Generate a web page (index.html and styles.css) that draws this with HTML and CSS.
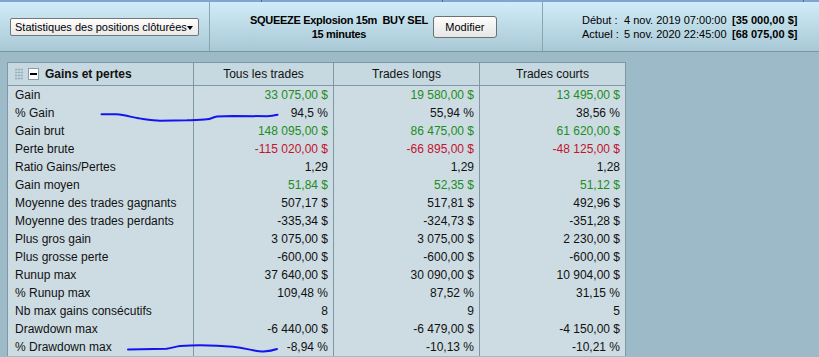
FILE: index.html
```html
<!DOCTYPE html>
<html lang="fr">
<head>
<meta charset="utf-8">
<title>Statistiques</title>
<link rel="stylesheet" href="styles.css">
</head>
<body>
<div class="topstrip">
  <span class="seg s1"></span><span class="seg s2"></span><span class="seg s3"></span><span class="seg s4"></span>
</div>
<header class="toolbar">
  <section class="tb-left">
    <div class="select">
      <span>Statistiques des positions clôturées</span>
      <span class="caret"></span>
    </div>
  </section>
  <section class="tb-mid">
    <div class="title">
      <div>SQUEEZE Explosion 15m&nbsp; BUY SEL</div>
      <div>15 minutes</div>
    </div>
    <button class="btn">Modifier</button>
  </section>
  <section class="tb-right">
    <div class="dates">
      <span>Début :</span><span>4 nov. 2019 07:00:00</span><b>[35 000,00 $]</b>
      <span>Actuel :</span><span>5 nov. 2020 22:45:00</span><b>[68 075,00 $]</b>
    </div>
  </section>
</header>

<main class="stats">
  <div class="hd first"><span class="grip"></span><span class="minus"></span><b>Gains et pertes</b></div>
  <div class="hd">Tous les trades</div>
  <div class="hd">Trades longs</div>
  <div class="hd">Trades courts</div>

  <div class="lb">Gain</div><div class="v pos">33 075,00 $</div><div class="v pos">19 580,00 $</div><div class="v pos">13 495,00 $</div>
  <div class="lb">% Gain</div><div class="v">94,5 %</div><div class="v">55,94 %</div><div class="v">38,56 %</div>
  <div class="lb">Gain brut</div><div class="v pos">148 095,00 $</div><div class="v pos">86 475,00 $</div><div class="v pos">61 620,00 $</div>
  <div class="lb">Perte brute</div><div class="v neg">-115 020,00 $</div><div class="v neg">-66 895,00 $</div><div class="v neg">-48 125,00 $</div>
  <div class="lb">Ratio Gains/Pertes</div><div class="v">1,29</div><div class="v">1,29</div><div class="v">1,28</div>
  <div class="lb">Gain moyen</div><div class="v pos">51,84 $</div><div class="v pos">52,35 $</div><div class="v pos">51,12 $</div>
  <div class="lb">Moyenne des trades gagnants</div><div class="v">507,17 $</div><div class="v">517,81 $</div><div class="v">492,96 $</div>
  <div class="lb">Moyenne des trades perdants</div><div class="v">-335,34 $</div><div class="v">-324,73 $</div><div class="v">-351,28 $</div>
  <div class="lb">Plus gros gain</div><div class="v">3 075,00 $</div><div class="v">3 075,00 $</div><div class="v">2 230,00 $</div>
  <div class="lb">Plus grosse perte</div><div class="v">-600,00 $</div><div class="v">-600,00 $</div><div class="v">-600,00 $</div>
  <div class="lb">Runup max</div><div class="v">37 640,00 $</div><div class="v">30 090,00 $</div><div class="v">10 904,00 $</div>
  <div class="lb">% Runup max</div><div class="v">109,48 %</div><div class="v">87,52 %</div><div class="v">31,15 %</div>
  <div class="lb">Nb max gains consécutifs</div><div class="v">8</div><div class="v">9</div><div class="v">5</div>
  <div class="lb">Drawdown max</div><div class="v">-6 440,00 $</div><div class="v">-6 479,00 $</div><div class="v">-4 150,00 $</div>
  <div class="lb">% Drawdown max</div><div class="v">-8,94 %</div><div class="v">-10,13 %</div><div class="v">-10,21 %</div>
</main>

<svg class="ink" width="819" height="357" viewBox="0 0 819 357" aria-hidden="true">
  <path d="M101.5 114.3 L116.5 114.3 C125 115 135 118 143 119 C150 120 155 120.7 160 120.7 L187 120.3 C195 120 202 119.8 207 119.3 C211 119 213 117 217 116.6 L233 116 L267 116.2 C271 116 274 115.5 277.5 114.8" />
  <path d="M128 349.4 L166.5 348.7 C172 348.2 176 346.4 180 346 C188 345.5 194 345.3 200 345.3 C212 345.4 224 346 233 346.8 C242 347.8 248 349.3 253 350.2 C257 351 260 351.6 263.5 351.4 C268 351.2 273 350.5 277 349" />
</svg>
</body>
</html>
```

FILE: styles.css
```css
* { box-sizing: border-box; }

html, body {
  margin: 0;
  padding: 0;
}

body {
  width: 819px;
  height: 357px;
  overflow: hidden;
  position: relative;
  background: #9cbac8;
  font-family: "Liberation Sans", Arial, sans-serif;
  font-size: 11px;
  color: #111;
}

/* top strip */
.topstrip {
  display: flex;
  height: 2px;
  background: #7fa6d3;
}
.seg { height: 2px; border-right: 1px solid #4f6f92; }
.s1 { width: 262px; }
.s2 { width: 181px; }
.s3 { width: 361px; }
.s4 { flex: 1; border-right: 0; }

/* toolbar */
.toolbar {
  display: flex;
  height: 50px;
  background: linear-gradient(#d0ecf8, #a9c8d5);
  border-bottom: 1px solid #7b96a3;
}
.toolbar section {
  display: flex;
  align-items: center;
}
.tb-left {
  width: 210px;
  padding-left: 10px;
  border-right: 1px solid #8aa3af;
}
.tb-mid {
  width: 333px;
  padding-left: 40px;
  border-right: 1px solid #8aa3af;
}
.tb-right {
  flex: 1;
  padding-left: 39px;
}

.select {
  width: 189px;
  height: 18px;
  margin-top: 1px;
  display: flex;
  align-items: center;
  justify-content: space-between;
  padding: 0 5px 0 4px;
  border: 1px solid #767676;
  border-radius: 2px;
  background: linear-gradient(#fefefe, #e9e9e9);
  font-size: 11px;
  white-space: nowrap;
  color: #000;
}
.caret {
  width: 0;
  height: 0;
  border-left: 3.5px solid transparent;
  border-right: 3.5px solid transparent;
  border-top: 4px solid #000;
  margin-top: 1px;
}

.title {
  font-weight: bold;
  font-size: 11px;
  letter-spacing: -0.3px;
  line-height: 14px;
  text-align: center;
  white-space: nowrap;
  color: #000;
  margin-top: 1px;
}
.btn {
  margin-left: 5px;
  width: 64px;
  height: 22px;
  margin-top: 1px;
  font-family: inherit;
  font-size: 11px;
  color: #000;
  border: 1px solid #707070;
  border-radius: 3px;
  background: linear-gradient(#fdfdfd, #e6e6e6);
  padding: 0;
}

.dates {
  display: grid;
  grid-template-columns: 42px 108px auto;
  line-height: 14px;
  font-size: 11px;
  white-space: nowrap;
  color: #000;
  margin-top: 1px;
}

/* stats grid */
.stats {
  display: grid;
  grid-template-columns: 186px 140px 146px 146px;
  width: 619px;
  margin: 10px 0 0 7px;
  border-left: 1px solid #7f98a5;
  border-top: 1px solid #7f98a5;
  background: #cddce3;
}
.stats > div {
  border-right: 1px solid #7f98a5;
  height: 18px;
  line-height: 18px;
  white-space: nowrap;
  font-size: 12px;
}
.hd {
  height: 23px !important;
  line-height: 22px !important;
  background: #c6d8e0;
  border-bottom: 1px solid #7f98a5;
  text-align: center;
}
.hd.first {
  display: flex;
  align-items: center;
  text-align: left;
  padding-left: 7px;
}
.hd.first b { font-size: 12px; margin-left: 6px; }
.grip {
  width: 8px;
  height: 12px;
  background-image: radial-gradient(circle, #8ea3ad 0.9px, transparent 1.1px);
  background-size: 3px 3px;
  background-position: -0.5px 0;
}
.minus {
  position: relative;
  width: 11px;
  height: 12px;
  margin-left: 5px;
  background: #fff;
  border: 1px solid #8a9ca5;
}
.minus::after {
  content: "";
  position: absolute;
  left: 1px;
  right: 1px;
  top: 4px;
  height: 2px;
  background: #000;
}
.lb { padding-left: 7px; }
.v { text-align: right; padding-right: 5px; }
.pos { color: #218c21; }
.neg { color: #c4122c; }

/* hand-drawn annotation over the page */
.ink {
  position: absolute;
  left: 0;
  top: 0;
  pointer-events: none;
}
.ink path {
  fill: none;
  stroke: #1414f0;
  stroke-width: 2;
  stroke-linecap: round;
  stroke-linejoin: round;
}
```
